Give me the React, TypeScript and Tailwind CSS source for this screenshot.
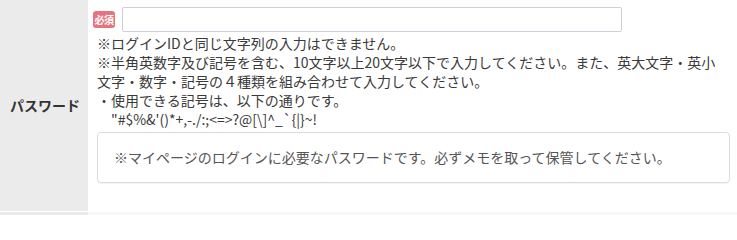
import React from 'react'

const font = { fontFamily: '"Noto Sans CJK JP", "Noto Sans", sans-serif' }

const App = () => {
  return (
    <div className="w-[737px] h-[215px] overflow-hidden bg-white text-[#333]" style={font}>
      {/* password row */}
      <div className="flex h-[211px]">
        <div className="w-[88px] shrink-0 bg-[#ebebeb] flex items-center pl-[10px] text-[14px] font-bold text-[#333]">
          パスワード
        </div>

        <div className="flex-1 pt-[7px] pl-[5px] pr-[7px]">
          <div className="flex items-center gap-[7px]">
            <span className="w-[22px] h-[17px] rounded-[3px] bg-[#e8737f] text-white text-[10px] font-bold leading-[17px] text-center tracking-[-0.5px]">
              必須
            </span>
            <input
              type="password"
              className="w-[500px] h-[25px] border border-[#cfcfdc] rounded-[2px] bg-white outline-none"
            />
          </div>

          <div className="pl-[4px] mt-[2px] text-[14px] leading-[19px] text-[#3a3a3a]">
            <p className="whitespace-nowrap">※ログインIDと同じ文字列の入力はできません。</p>
            <p className="whitespace-nowrap">
              ※半角英数字及び記号を含む、10文字以上20文字以下で入力してください。また、英大文字・英小
              <br />
              文字・数字・記号の４種類を組み合わせて入力してください。
            </p>
            <p className="whitespace-nowrap">・使用できる記号は、以下の通りです。</p>
            <p className="pl-[14px] whitespace-nowrap">"#$%&amp;'()*+,-./:;&lt;=&gt;?@[\]^_`{'{'}|{'}'}~!</p>

            {/* note */}
            <div className="mt-[3px] h-[51px] border border-[#dcdcdc] rounded-[4px] shadow-[0_1px_1px_rgba(0,0,0,0.05)] flex items-center pl-[16px] text-[14px] text-[#555]">
              ※マイページのログインに必要なパスワードです。必ずメモを取って保管してください。
            </div>
          </div>
        </div>
      </div>

      {/* next row edge */}
      <div className="flex h-[3px] mt-[1px]">
        <div className="w-[88px] bg-[#ebebeb]" />
        <div className="flex-1 bg-[#f8f8f8]" />
      </div>
    </div>
  )
}

export default App
